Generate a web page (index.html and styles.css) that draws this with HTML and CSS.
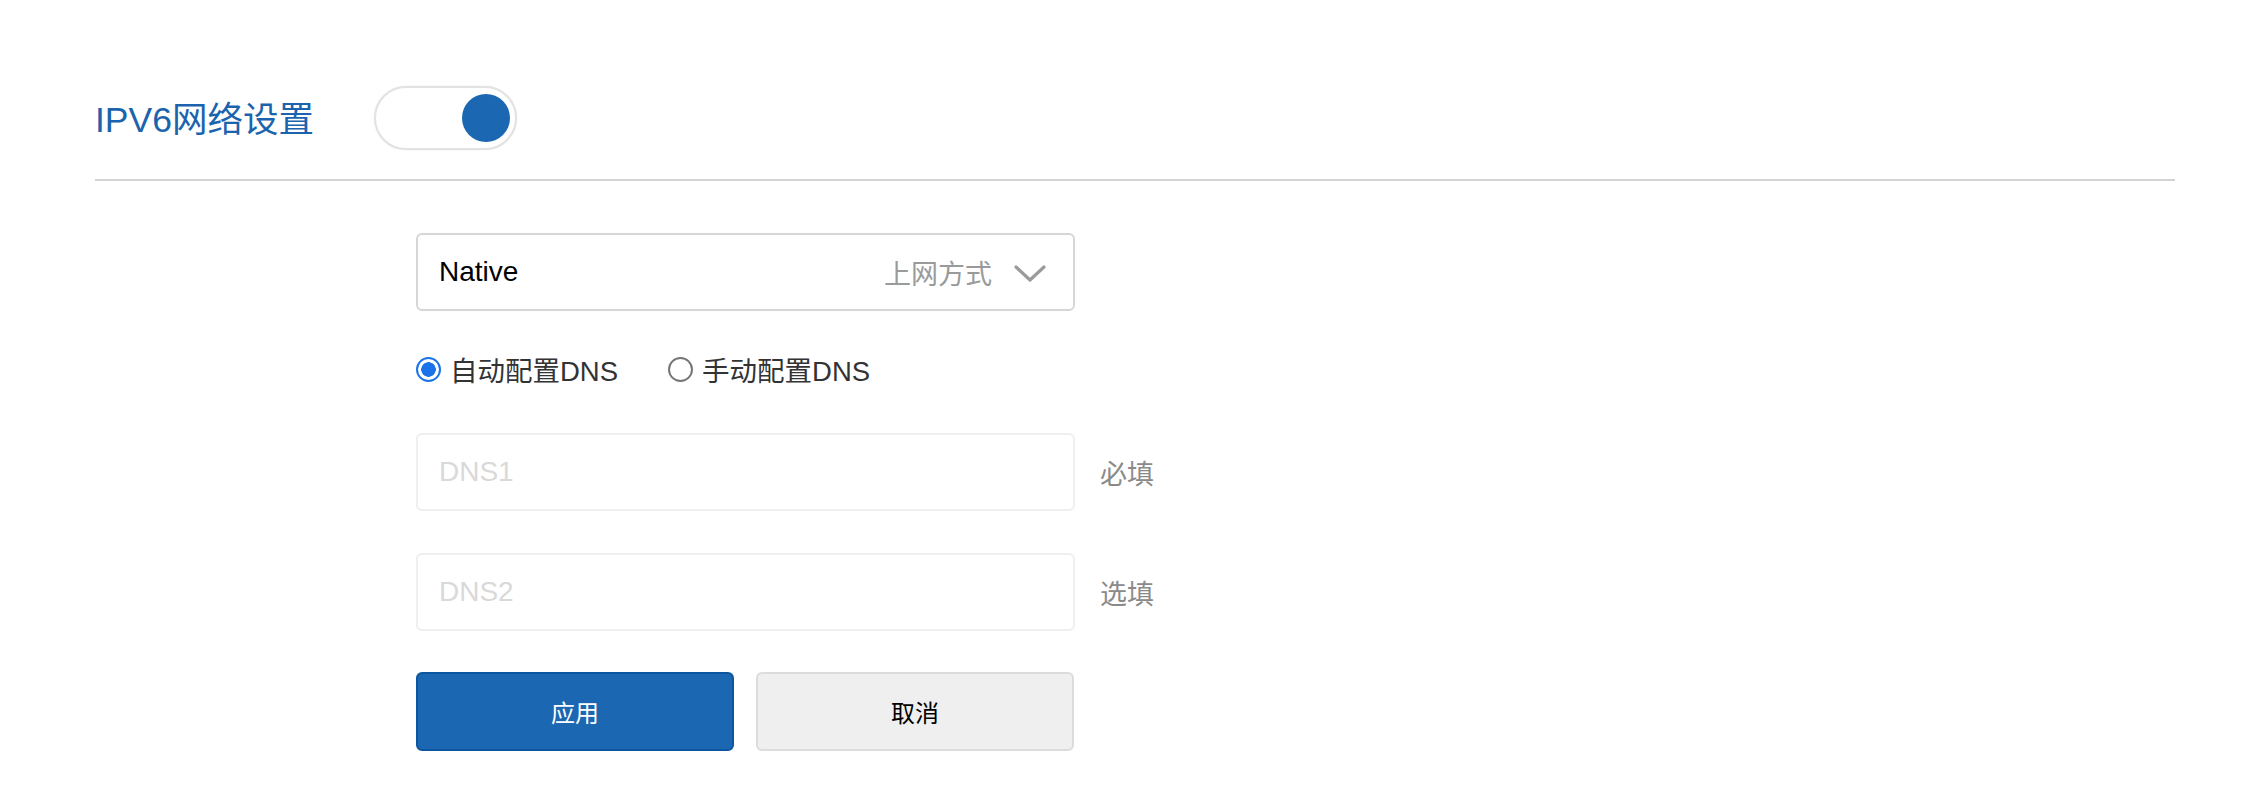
FILE: index.html
```html
<!DOCTYPE html>
<html lang="zh-CN">
<head>
<meta charset="utf-8">
<title>IPV6网络设置</title>
<link rel="stylesheet" href="styles.css">
</head>
<body>
<div class="page">
  <div class="header">
    <h1 class="title">IPV6网络设置</h1>
    <div class="toggle"><span class="knob"></span></div>
  </div>
  <div class="divider"></div>
  <div class="form">
    <div class="select">
      <span class="select-value">Native</span>
      <span class="select-label">上网方式</span>
      <svg class="chevron" width="32" height="18" viewBox="0 0 32 18"><path d="M2 2 L16 15 L30 2" fill="none" stroke="#9b9b9b" stroke-width="3.2" stroke-linecap="round" stroke-linejoin="round"/></svg>
    </div>
    <div class="radios">
      <label class="radio"><span class="dot checked"></span>自动配置DNS</label>
      <label class="radio"><span class="dot"></span>手动配置DNS</label>
    </div>
    <div class="field-row">
      <div class="input"><span class="placeholder">DNS1</span></div>
      <span class="hint">必填</span>
    </div>
    <div class="field-row">
      <div class="input"><span class="placeholder">DNS2</span></div>
      <span class="hint">选填</span>
    </div>
    <div class="buttons">
      <div class="btn btn-primary">应用</div>
      <div class="btn btn-secondary">取消</div>
    </div>
  </div>
</div>
</body>
</html>
```
FILE: styles.css
```css
* { box-sizing: border-box; }
html, body { margin: 0; padding: 0; background: #fff; }
body {
  font-family: "Liberation Sans", "Noto Sans CJK SC", sans-serif;
  width: 2258px;
  height: 804px;
  overflow: hidden;
}
.page {
  padding: 86px 83px 0 95px;
}
.header {
  display: flex;
  align-items: center;
  height: 64px;
}
.title {
  margin: 0;
  font-size: 35.5px;
  font-weight: normal;
  color: #1b64ad;
  line-height: 1;
  padding-top: 5px;
  width: 279px;
}
.toggle {
  width: 143px;
  height: 64px;
  border: 2px solid #e2e2e2;
  border-radius: 32px;
  background: #fff;
  display: flex;
  align-items: center;
  justify-content: flex-end;
  padding-right: 5px;
  box-shadow: 0 0 2px rgba(0,0,0,0.08);
}
.knob {
  width: 48px;
  height: 48px;
  border-radius: 50%;
  background: #1c67b1;
}
.divider {
  margin-top: 29px;
  height: 2px;
  background: #d3d3d3;
}
.form {
  margin-left: 321px;
  padding-top: 52px;
  width: 760px;
}
.select {
  width: 659px;
  height: 78px;
  border: 2px solid #d6d6d6;
  border-radius: 6px;
  display: flex;
  align-items: center;
  padding: 0 27px 0 21px;
}
.select-value {
  font-size: 28px;
  color: #000;
  flex: 1;
}
.select-label {
  font-size: 27px;
  color: #9a9a9a;
  margin-right: 22px;
}
.chevron { display: block; margin-top: 4px; }
.radios {
  display: flex;
  align-items: center;
  height: 40px;
  margin-top: 38px;
  font-size: 27.5px;
  color: #333;
}
.radio {
  display: flex;
  align-items: center;
  margin-right: 50px;
}
.dot {
  width: 25px;
  height: 25px;
  border-radius: 50%;
  border: 2px solid #767676;
  margin-right: 9px;
  background: #fff;
}
.dot.checked {
  border: 2px solid #1a73e8;
  background: radial-gradient(circle, #1a73e8 0 7px, #fff 7.5px);
}
.field-row {
  display: flex;
  align-items: center;
}
.radios + .field-row { margin-top: 44px; }
.field-row + .field-row { margin-top: 42px; }
.input {
  width: 659px;
  height: 78px;
  border: 2px solid #efefef;
  border-radius: 6px;
  display: flex;
  align-items: center;
  padding-left: 21px;
}
.placeholder {
  font-size: 28px;
  color: #d9d9d9;
}
.hint {
  margin-left: 25px;
  font-size: 27px;
  color: #8a8a8a;
}
.buttons {
  display: flex;
  gap: 22px;
  margin-top: 41px;
  width: 659px;
}
.btn {
  width: 318px;
  height: 79px;
  border-radius: 6px;
  display: flex;
  align-items: center;
  justify-content: center;
  font-size: 24px;
}
.btn-primary {
  background: #1c67b1;
  border: 2px solid #0c559f;
  color: #fff;
}
.btn-secondary {
  background: #efefef;
  border: 2px solid #dcdcdc;
  color: #000;
}
```
